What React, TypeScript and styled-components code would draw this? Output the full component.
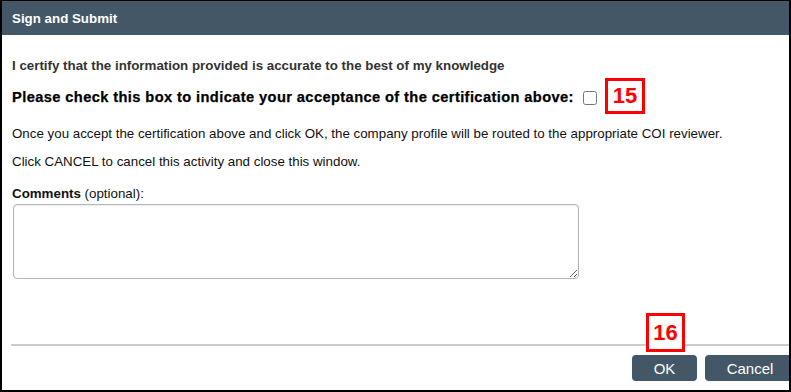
import styled, { createGlobalStyle } from "styled-components";

const GlobalStyle = createGlobalStyle`
    html, body {
        margin: 0;
        padding: 0;
        background: #ffffff;
    }
    body {
        font-family: "Liberation Sans", Arial, sans-serif;
    }
`;

const Dialog = styled.div`
    position: relative;
    width: 791px;
    height: 392px;
    box-sizing: border-box;
    border: 2px solid #000;
    border-top-width: 1px;
    background: #fff;
    overflow: hidden;
    display: flex;
    flex-direction: column;
`;

const Header = styled.div`
    height: 34px;
    flex: none;
    background: #435767;
    color: #fff;
    font-size: 13.33px;
    font-weight: bold;
    display: flex;
    align-items: center;
    padding-left: 10px;
`;

const Body = styled.div`
    padding: 0 10px;
    flex: 1;
`;

const Certify = styled.p`
    margin: 23px 0 0;
    font-size: 13.33px;
    line-height: 15px;
    font-weight: bold;
    color: #333;
`;

const AcceptRow = styled.div`
    display: flex;
    align-items: center;
    margin-top: 6px;
    height: 36px;
`;

const AcceptLabel = styled.span`
    font-size: 14.67px;
    font-weight: bold;
    color: #000;
    letter-spacing: 0.39px;
    -webkit-text-stroke: 0.25px #000;
`;

const Checkbox = styled.input.attrs({ type: "checkbox" })`
    width: 14px;
    height: 14px;
    margin: 2px 0 0 9px;
`;

const Callout = styled.div`
    box-sizing: border-box;
    width: 40px;
    height: 36px;
    border: 3px solid #ff0000;
    color: #ff0000;
    font-size: 22px;
    font-weight: bold;
    display: flex;
    align-items: center;
    justify-content: center;
    background: #fff;
`;

const InlineCallout = styled(Callout)`
    margin: -3px 0 0 8px;
`;

const Note = styled.p<{ $top: number }>`
    margin: ${(p) => p.$top}px 0 0;
    font-size: 13.33px;
    line-height: 15px;
    color: #111;
`;

const CommentsLabel = styled.label`
    display: block;
    margin-top: 17px;
    font-size: 13.33px;
    line-height: 15px;
    color: #111;
    b {
        font-weight: bold;
    }
`;

const Comments = styled.textarea`
    display: block;
    box-sizing: border-box;
    width: 566px;
    height: 75px;
    margin: 3px 0 0 1px;
    border: 1px solid #b5b5b5;
    border-radius: 4px;
    box-shadow: inset 0 1px 2px rgba(0, 0, 0, 0.08);
`;

const Footer = styled.div`
    position: relative;
    flex: none;
    margin-left: 9px;
    margin-right: -6px;
    border-top: 2px solid #cccccc;
    padding-top: 9px;
    height: 35px;
    display: flex;
    justify-content: flex-end;
    gap: 8px;
`;

const Button = styled.button<{ $w: number }>`
    width: ${(p) => p.$w}px;
    height: 26px;
    background: #435767;
    color: #fff;
    border: none;
    border-radius: 4px;
    font-family: "Liberation Sans", Arial, sans-serif;
    font-size: 15px;
    padding: 0;
`;

const FooterCallout = styled(Callout)`
    position: absolute;
    left: 635px;
    top: -33px;
    width: 39px;
    height: 39px;
`;

export default function App() {
    return (
        <>
            <GlobalStyle />
            <Dialog>
                <Header>Sign and Submit</Header>
                <Body>
                    <Certify>
                        I certify that the information provided is accurate to the best of my knowledge
                    </Certify>
                    <AcceptRow>
                        <AcceptLabel>
                            Please check this box to indicate your acceptance of the certification above:
                        </AcceptLabel>
                        <Checkbox />
                        <InlineCallout>15</InlineCallout>
                    </AcceptRow>
                    <Note $top={11}>
                        Once you accept the certification above and click OK, the company profile will be routed to the appropriate COI reviewer.
                    </Note>
                    <Note $top={13}>Click CANCEL to cancel this activity and close this window.</Note>
                    <CommentsLabel>
                        <b>Comments</b> (optional):
                    </CommentsLabel>
                    <Comments />
                </Body>
                <Footer>
                    <FooterCallout>16</FooterCallout>
                    <Button $w={65}>OK</Button>
                    <Button $w={90}>Cancel</Button>
                </Footer>
            </Dialog>
        </>
    );
}
